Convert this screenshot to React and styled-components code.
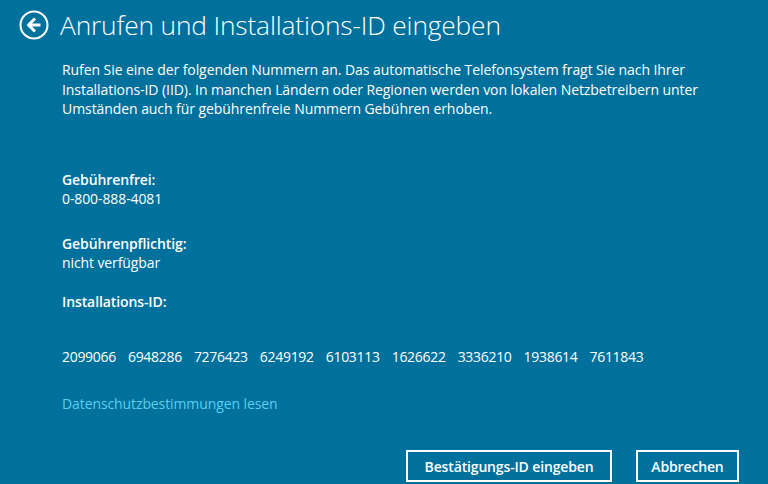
import React from "react";
import styled, { createGlobalStyle } from "styled-components";

const GlobalStyle = createGlobalStyle`
  html, body {
    margin: 0;
    padding: 0;
    background: #00709c;
  }
  body {
    font-family: "Open Sans", "Noto Sans", sans-serif;
    color: #ffffff;
  }
`;

const Page = styled.div`
  width: 768px;
  height: 484px;
  background: #00709c;
  display: flex;
  flex-direction: column;
  overflow: hidden;
`;

const Header = styled.div`
  display: flex;
  align-items: center;
  gap: 11px;
  padding: 9px 0 0 19px;
  height: 32px;
`;

const BackButton = styled.button`
  width: 30px;
  height: 30px;
  padding: 0;
  border: none;
  background: none;
  display: flex;
  align-items: center;
  justify-content: center;
  color: #fff;
`;

const Title = styled.h1`
  margin: 0;
  font-size: 26.3px;
  font-weight: 300;
  letter-spacing: -0.15px;
  line-height: 32px;
`;

const Content = styled.div`
  padding: 19px 29px 0 62px;
  display: flex;
  flex-direction: column;
  flex: 1;
`;

const Intro = styled.p`
  margin: 0;
  font-size: 14px;
  line-height: 19.5px;
  letter-spacing: -0.07px;
`;

const Field = styled.div`
  margin-top: ${(p) => p.$gap}px;
  font-size: 14px;
  line-height: 19px;
  letter-spacing: -0.1px;
`;

const Label = styled.div`
  font-weight: 600;
`;

const Value = styled.div`
  font-weight: 400;
`;

const IdRow = styled.div`
  margin-top: 36px;
  display: flex;
  gap: 12px;
  font-size: 14px;
  line-height: 19px;
  letter-spacing: -0.3px;
`;

const Link = styled.a`
  margin-top: 28px;
  font-size: 14px;
  line-height: 19px;
  letter-spacing: -0.1px;
  color: #5ccfee;
  text-decoration: none;
`;

const Actions = styled.div`
  margin-top: auto;
  display: flex;
  justify-content: flex-end;
  gap: 24px;
  padding-bottom: 2px;
`;

const ActionButton = styled.button`
  height: 32px;
  width: ${(p) => p.$w}px;
  border: 2px solid #ffffff;
  background: transparent;
  color: #ffffff;
  font-family: "Open Sans", "Noto Sans", sans-serif;
  font-size: 14px;
  font-weight: 600;
  letter-spacing: -0.15px;
  padding: 0;
`;

const ids = [
  "2099066",
  "6948286",
  "7276423",
  "6249192",
  "6103113",
  "1626622",
  "3336210",
  "1938614",
  "7611843",
];

export default function App() {
  return (
    <Page>
      <GlobalStyle />
      <Header>
        <BackButton aria-label="Zurück">
          <svg width="30" height="30" viewBox="0 0 30 30" fill="none">
            <circle cx="15" cy="15" r="13.5" stroke="#fff" strokeWidth="2" />
            <path
              d="M16 8.5 L9.5 15 L16 21.5 M9.8 15 H21.5"
              stroke="#fff"
              strokeWidth="3"
              strokeLinejoin="round"
            />
          </svg>
        </BackButton>
        <Title>Anrufen und Installations-ID eingeben</Title>
      </Header>
      <Content>
        <Intro>
          Rufen Sie eine der folgenden Nummern an. Das automatische
          Telefonsystem fragt Sie nach Ihrer Installations-ID (IID). In manchen
          Ländern oder Regionen werden von lokalen Netzbetreibern unter
          Umständen auch für gebührenfreie Nummern Gebühren erhoben.
        </Intro>
        <Field $gap={51}>
          <Label>Gebührenfrei:</Label>
          <Value>0-800-888-4081</Value>
        </Field>
        <Field $gap={26}>
          <Label>Gebührenpflichtig:</Label>
          <Value>nicht verfügbar</Value>
        </Field>
        <Field $gap={20}>
          <Label>Installations-ID:</Label>
        </Field>
        <IdRow>
          {ids.map((id) => (
            <span key={id}>{id}</span>
          ))}
        </IdRow>
        <Link href="#">Datenschutzbestimmungen lesen</Link>
        <Actions>
          <ActionButton $w={206}>Bestätigungs-ID eingeben</ActionButton>
          <ActionButton $w={103}>Abbrechen</ActionButton>
        </Actions>
      </Content>
    </Page>
  );
}
